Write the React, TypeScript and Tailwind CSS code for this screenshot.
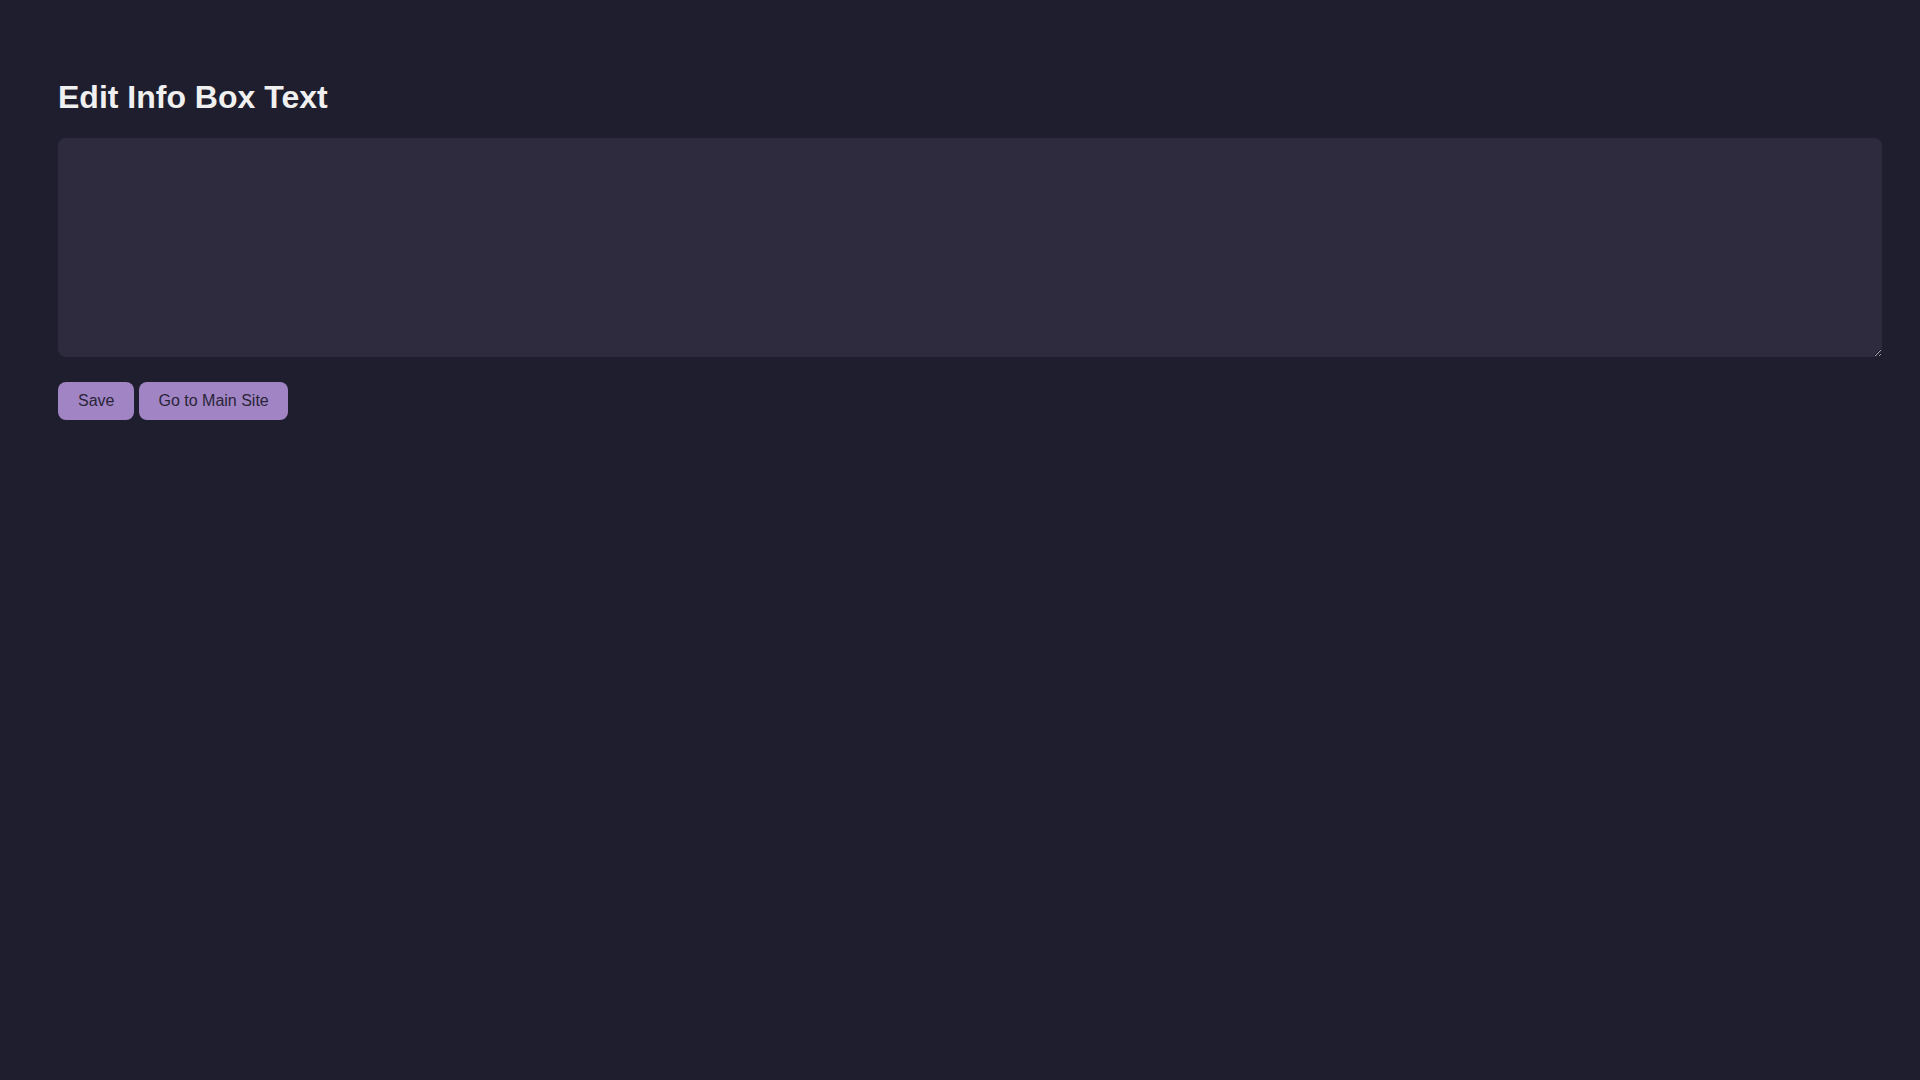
import { useState } from "react"

export default function App() {
  const [text, setText] = useState("")

  return (
    <div
      className="min-h-screen bg-[#1f1e2e] p-[58px] text-[#f0f0f0]"
      style={{ fontFamily: '"Liberation Sans", Arial, sans-serif' }}
    >
      <h1 className="text-[32px] font-bold leading-[37px] mt-[21px] mb-[22px]">Edit Info Box Text</h1>

      <textarea
        value={text}
        onChange={(e) => setText(e.target.value)}
        className="block w-[1824px] h-[219px] p-[10px] rounded-lg bg-[#2d2b3d] text-[#f0f0f0] text-base outline-none border-0"
      />

      <div className="flex gap-[5px] mt-[25px]">
        <button className="h-[38px] px-[20px] rounded-lg bg-[#a084c4] text-[#2a2438] text-base hover:opacity-90">
          Save
        </button>
        <button className="h-[38px] px-[19px] rounded-lg bg-[#a084c4] text-[#2a2438] text-base hover:opacity-90">
          Go to Main Site
        </button>
      </div>
    </div>
  )
}
